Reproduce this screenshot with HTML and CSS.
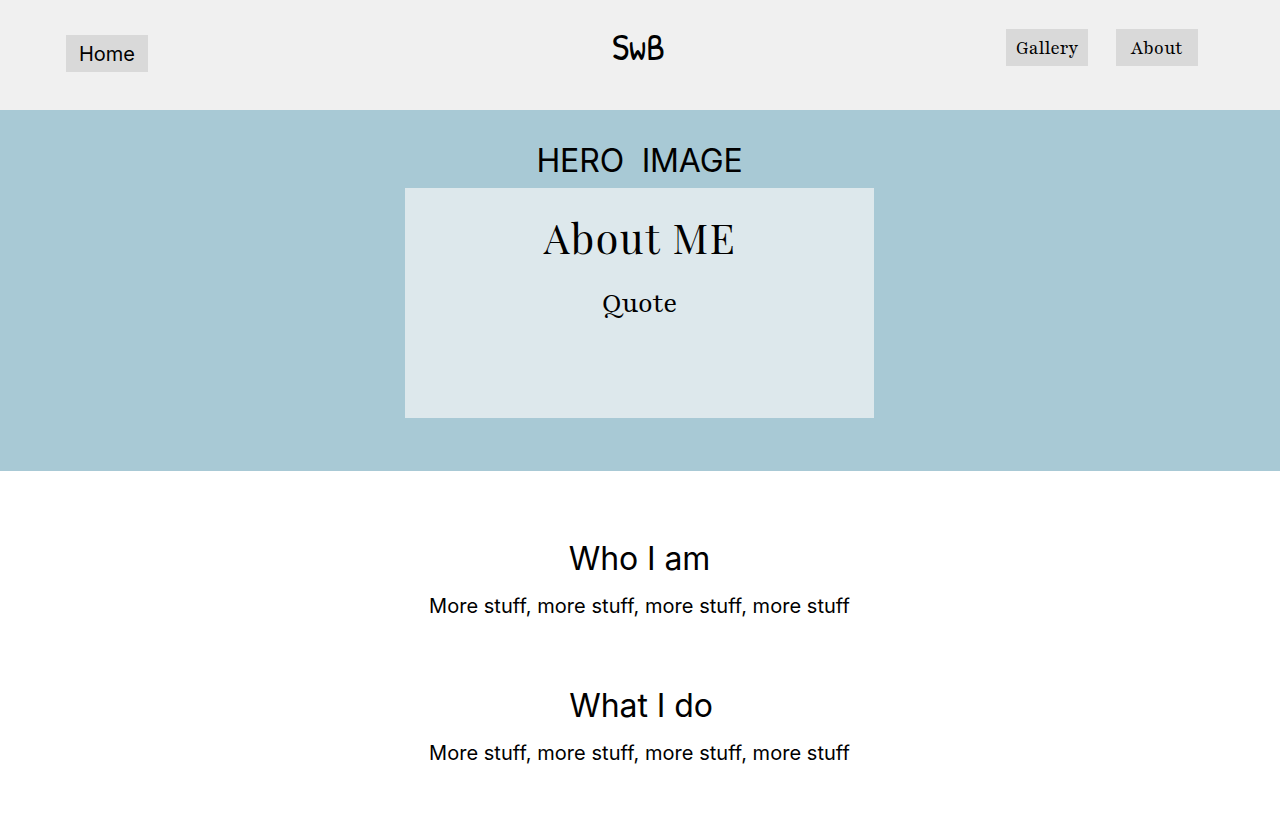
FILE: index.html
```html
<!DOCTYPE html>
<html lang="en">
<head>
<meta charset="utf-8">
<title>SwB</title>
<link rel="stylesheet" href="styles.css">
</head>
<body>
<header class="header">
  <nav class="nav-left"><a class="button home">Home</a></nav>
  <svg class="logo" width="60" height="44" viewBox="0 0 60 44"><text transform="translate(2 31) scale(.95 1)">SwB</text></svg>
  <nav class="nav-right"><a class="button serif gallery">Gallery</a><a class="button serif about">About</a></nav>
</header>
<section class="hero">
  <div class="hero-title">HERO&nbsp; IMAGE</div>
  <div class="card">
    <h1 class="card-title">About ME</h1>
    <p class="quote">Quote</p>
  </div>
</section>
<main class="content">
  <section class="block">
    <h2 class="heading">Who I am</h2>
    <p class="text">More stuff, more stuff, more stuff, more stuff</p>
  </section>
  <section class="block">
    <h2 class="heading what">What I do</h2>
    <p class="text">More stuff, more stuff, more stuff, more stuff</p>
  </section>
</main>
</body>
</html>
```
FILE: styles.css
```css
* { box-sizing: border-box; margin: 0; padding: 0; }
body { width: 1280px; height: 832px; overflow: hidden; background: #fff; color: #000; font-family: Inter, sans-serif; }
.header { height: 110px; background: #f0f0f0; display: grid; grid-template-columns: 1fr 60px 1fr; align-items: start; padding: 29px 82px 0 66px; }
.nav-left { padding-top: 6px; }
.nav-right { display: flex; justify-content: flex-end; gap: 28px; }
.button { display: block; width: 82px; height: 37px; line-height: 37px; background: #d9d9d9; text-align: center; white-space: nowrap; }
.home { font-size: 20px; line-height: 39px; }
.serif { font-family: Playfair, "Playfair Display", "Liberation Serif", serif; font-size: 20px; line-height: 38px; letter-spacing: -0.1px; }
.about { padding-right: 1px; }
.logo { margin-left: 8px; overflow: visible; }
.logo text { font-family: "Patrick Hand", Inter, sans-serif; font-size: 39px; }
.hero { height: 361px; background: #a8c9d5; display: flex; flex-direction: column; align-items: center; padding: 30px 1px 0 0; }
.hero-title { height: 48px; line-height: 42px; font-size: 32px; letter-spacing: -0.15px; }
.card { width: 469px; height: 230px; background: #dde8ec; text-align: center; padding-top: 22px; font-family: Playfair, "Playfair Display", "Liberation Serif", serif; }
.card-title { font-family: "Playfair Display", "Liberation Serif", serif; font-size: 41px; line-height: 54px; font-weight: 400; letter-spacing: 1.6px; padding-left: 1px; }
.quote { font-size: 30px; line-height: 36px; margin-top: 21px; letter-spacing: -0.3px; }
.content { padding: 67px 1px 0 0; text-align: center; }
.block { height: 147px; }
.heading { font-size: 32px; line-height: 42px; font-weight: 400; letter-spacing: -0.08px; }
.what { padding-left: 3px; }
.text { font-size: 20px; line-height: 26px; margin-top: 13px; letter-spacing: 0.04px; }
```
